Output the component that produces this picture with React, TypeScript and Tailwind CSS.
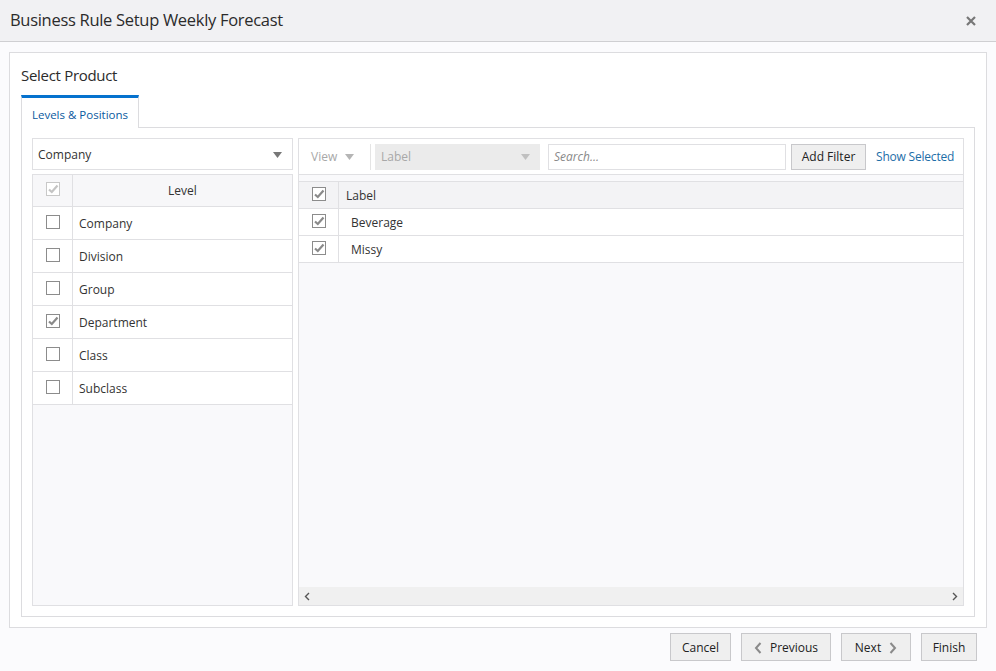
import React from 'react';

const Check: React.FC<{ checked?: boolean; disabled?: boolean }> = ({ checked, disabled }) => (
  <span
    className={`inline-flex items-center justify-center w-[14px] h-[14px] border bg-white ${
      disabled ? 'border-[#c8c8c8]' : 'border-[#8c8c8c]'
    }`}
  >
    {checked && (
      <svg width="12" height="10" viewBox="0 0 12 10">
        <path
          d="M2 5.5 L4.8 8 L10.5 1.5"
          fill="none"
          stroke={disabled ? '#c4c4c4' : '#8a8a8a'}
          strokeWidth="2.2"
        />
      </svg>
    )}
  </span>
);

const Caret: React.FC<{ color?: string }> = ({ color = '#777' }) => (
  <svg width="9" height="6" viewBox="0 0 9 6">
    <path d="M0 0 H9 L4.5 6 Z" fill={color} />
  </svg>
);

const levels = [
  { name: 'Company', checked: false },
  { name: 'Division', checked: false },
  { name: 'Group', checked: false },
  { name: 'Department', checked: true },
  { name: 'Class', checked: false },
  { name: 'Subclass', checked: false },
];

const labels = ['Beverage', 'Missy'];

const App: React.FC = () => {
  return (
    <div className="w-[996px] h-[671px] bg-[#fbfbfd] flex flex-col text-[#333] font-['Open_Sans','Noto_Sans',sans-serif] overflow-hidden">
      {/* header */}
      <div className="h-[42px] shrink-0 bg-[#f1f1f3] border-b border-[#cfcfd2] flex items-center justify-between pl-[10px] pr-[20px]">
        <h1 className="text-[16.5px] tracking-[-0.3px] text-[#2b2b2b]">Business Rule Setup Weekly Forecast</h1>
        <svg width="10" height="10" viewBox="0 0 10 10">
          <path d="M1 1 L9 9 M9 1 L1 9" stroke="#777" strokeWidth="2.2" />
        </svg>
      </div>

      {/* body */}
      <div className="px-[9px] pt-[10px]">
        <div className="h-[576px] bg-white border border-[#dcdcdf] flex flex-col pl-[11px] pr-[11px] pb-[10px]">
          <div className="h-[42px] flex items-end pb-[9px]">
            <h2 className="text-[15px] text-[#2b2b2b] tracking-[-0.3px]">Select Product</h2>
          </div>

          {/* tab */}
          <div className="flex">
            <div className="w-[118px] h-[33px] border-t-[3px] border-t-[#0572ce] border-x border-x-[#dcdcdf] bg-white flex items-center justify-center text-[11.5px] text-[#0a5aa0] relative z-10 -mb-px pt-[3px] whitespace-nowrap">
              Levels &amp; Positions
            </div>
          </div>

          {/* tab content */}
          <div className="flex-1 border border-[#dcdcdf] p-[10px] flex gap-[5px] min-h-0">
            {/* left */}
            <div className="w-[261px] shrink-0 flex flex-col gap-[4px]">
              <div className="h-[32px] border border-[#e0e0e3] flex items-center justify-between pl-[5px] pr-[10px] text-[12px] pt-[1px]">
                <span>Company</span>
                <Caret />
              </div>
              <div className="flex-1 border border-[#e0e0e3] bg-[#f9f9fb] flex flex-col text-[12px]">
                <div className="h-[32px] flex bg-[#f7f7f9] border-b border-[#e0e0e3]">
                  <div className="w-[40px] border-r border-[#e0e0e3] flex items-center justify-center pb-[3px]">
                    <Check checked disabled />
                  </div>
                  <div className="flex-1 flex items-center justify-center pt-[1px]">Level</div>
                </div>
                {levels.map((l) => (
                  <div key={l.name} className="h-[33px] flex bg-white border-b border-[#e0e0e3]">
                    <div className="w-[40px] border-r border-[#e0e0e3] flex items-center justify-center pb-[3px]">
                      <Check checked={l.checked} />
                    </div>
                    <div className="flex-1 flex items-center pl-[6px] pt-[2px]">{l.name}</div>
                  </div>
                ))}
              </div>
            </div>

            {/* right */}
            <div className="flex-1 border border-[#e0e0e3] flex flex-col text-[12px] min-w-0">
              <div className="h-[36px] shrink-0 border-b border-[#e0e0e3] flex items-center pl-[12px] pr-[4px] bg-white whitespace-nowrap">
                <div className="flex items-center gap-[8px] text-[#a8a8a8] w-[60px] border-r border-[#e4e4e4] h-[26px] pt-[1px]">
                  <span>View</span>
                  <Caret color="#b5b5b5" />
                </div>
                <div className="ml-[4px] w-[165px] h-[26px] bg-[#ebebeb] flex items-center justify-between pl-[6px] pr-[10px] text-[#a8a8a8] pt-[1px]">
                  <span>Label</span>
                  <Caret color="#c0c0c0" />
                </div>
                <div className="ml-[8px] w-[238px] h-[26px] border border-[#e0e0e3] flex items-center pl-[5px] italic text-[#8a8a8a] pt-[1px]">
                  Search...
                </div>
                <div className="ml-[5px] w-[75px] h-[26px] border border-[#c8c8cb] bg-[#efefef] flex items-center justify-center text-[#222] pt-[1px]">
                  Add Filter
                </div>
                <div className="ml-[10px] text-[#1d6ea8] tracking-[-0.2px] pt-[1px]">Show Selected</div>
              </div>
              <div className="flex-1 bg-[#f9f9fb] flex flex-col pt-[6px] min-h-0">
                <div className="h-[28px] flex bg-[#f3f3f5] border-y border-[#e0e0e3]">
                  <div className="w-[40px] border-r border-[#e0e0e3] flex items-center justify-center pb-[2px]">
                    <Check checked />
                  </div>
                  <div className="flex items-center pl-[7px] pt-[2px]">Label</div>
                </div>
                {labels.map((l) => (
                  <div key={l} className="h-[27px] flex bg-white border-b border-[#e0e0e3]">
                    <div className="w-[40px] border-r border-[#e0e0e3] flex items-center justify-center pb-[3px]">
                      <Check checked />
                    </div>
                    <div className="flex items-center pl-[12px] pt-[2px]">{l}</div>
                  </div>
                ))}
                <div className="flex-1" />
                <div className="h-[18px] bg-[#f0f0f0] flex items-center justify-between px-[5px]">
                  <svg width="6" height="9" viewBox="0 0 6 9">
                    <path d="M5 1 L1.5 4.5 L5 8" fill="none" stroke="#555" strokeWidth="1.4" />
                  </svg>
                  <svg width="6" height="9" viewBox="0 0 6 9">
                    <path d="M1 1 L4.5 4.5 L1 8" fill="none" stroke="#555" strokeWidth="1.4" />
                  </svg>
                </div>
              </div>
            </div>
          </div>
        </div>
      </div>

      {/* footer */}
      <div className="flex justify-end gap-[10px] pr-[19px] pt-[5px] text-[12px]">
        <button className="h-[28px] w-[61px] border border-[#c8c8cb] bg-[#efefef] text-[#222] pt-[1px]">Cancel</button>
        <button className="h-[28px] w-[90px] border border-[#c8c8cb] bg-[#efefef] text-[#222] flex items-center justify-center gap-[8px] pt-[1px]">
          <svg width="8" height="12" viewBox="0 0 8 12">
            <path d="M6.5 1 L2 6 L6.5 11" fill="none" stroke="#8a8a8a" strokeWidth="2" />
          </svg>
          Previous
        </button>
        <button className="h-[28px] w-[70px] border border-[#c8c8cb] bg-[#efefef] text-[#222] flex items-center justify-center gap-[8px] pt-[1px]">
          Next
          <svg width="8" height="12" viewBox="0 0 8 12">
            <path d="M1.5 1 L6 6 L1.5 11" fill="none" stroke="#8a8a8a" strokeWidth="2" />
          </svg>
        </button>
        <button className="h-[28px] w-[56px] border border-[#c8c8cb] bg-[#efefef] text-[#222] pt-[1px]">Finish</button>
      </div>
    </div>
  );
};

export default App;
